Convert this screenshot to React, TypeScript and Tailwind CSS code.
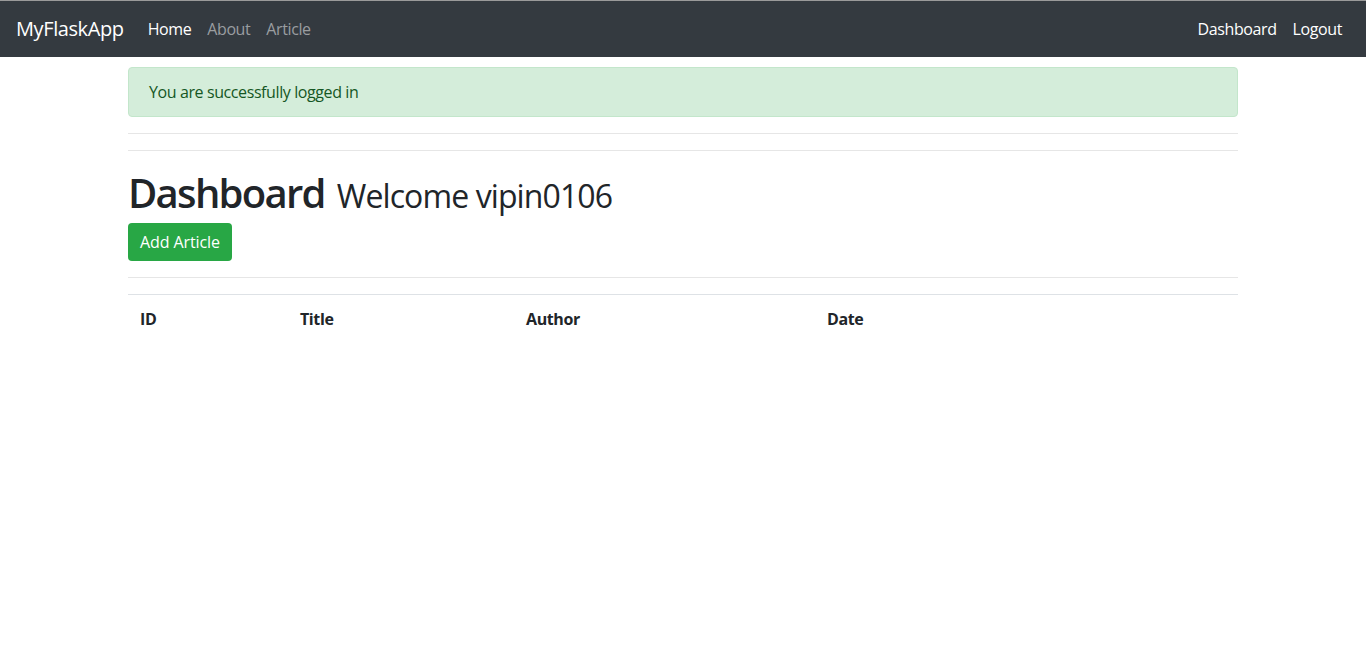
import React from 'react'

const font = { fontFamily: '"Open Sans", "Noto Sans", sans-serif' }

const NavBar: React.FC = () => (
  <nav className="flex h-[57px] items-center justify-between border-t border-[#9a9a9a] bg-[#343a40] px-4">
    <div className="flex items-center">
      <a className="mr-4 text-[20px] leading-[30px] tracking-[-0.4px] text-white">MyFlaskApp</a>
      <a className="px-2 text-base leading-6 tracking-[-0.4px] text-white">Home</a>
      <a className="px-2 text-base leading-6 tracking-[-0.4px] text-[#9a9da0]">About</a>
      <a className="px-2 text-base leading-6 tracking-[-0.4px] text-[#9a9da0]">Article</a>
    </div>
    <div className="flex items-center">
      <a className="px-2 text-base leading-6 tracking-[-0.4px] text-white">Dashboard</a>
      <a className="px-2 text-base leading-6 tracking-[-0.4px] text-white">Logout</a>
    </div>
  </nav>
)

const Rule: React.FC = () => <hr className="my-4 border-t border-[#e6e6e6]" />

export default function App() {
  return (
    <div className="min-h-[650px] bg-white text-[#212529]" style={font}>
      <NavBar />
      <div className="mx-auto w-[1110px] pt-[10px]">
        <div className="mb-4 rounded border border-[#c3e6cb] bg-[#d4edda] px-5 py-3 text-base leading-6 tracking-[-0.4px] text-[#155724]">
          You are successfully logged in
        </div>
        <Rule />
        <Rule />
        <h1 className="mb-2 flex h-[48px] items-baseline pt-[2px] text-[40px] font-semibold leading-[48px] tracking-[-1.7px]">
          Dashboard
          <small className="ml-[12px] text-[32px] font-normal leading-none tracking-[-0.9px]">Welcome vipin0106</small>
        </h1>
        <button className="rounded bg-[#28a745] px-3 py-[7px] text-base leading-6 tracking-[-0.1px] text-white">
          Add Article
        </button>
        <hr className="mt-4 border-t border-[#e6e6e6]" />
        <table className="mt-4 w-full border-collapse text-left">
          <tbody>
            <tr>
              <th className="w-[160px] border-t border-[#dee2e6] p-3 text-base font-bold leading-6 tracking-[-0.4px]">ID</th>
              <th className="w-[226px] border-t border-[#dee2e6] p-3 text-base font-bold leading-6 tracking-[-0.4px]">Title</th>
              <th className="w-[301px] border-t border-[#dee2e6] p-3 text-base font-bold leading-6 tracking-[-0.4px]">Author</th>
              <th className="border-t border-[#dee2e6] p-3 text-base font-bold leading-6 tracking-[-0.4px]">Date</th>
            </tr>
          </tbody>
        </table>
      </div>
    </div>
  )
}
